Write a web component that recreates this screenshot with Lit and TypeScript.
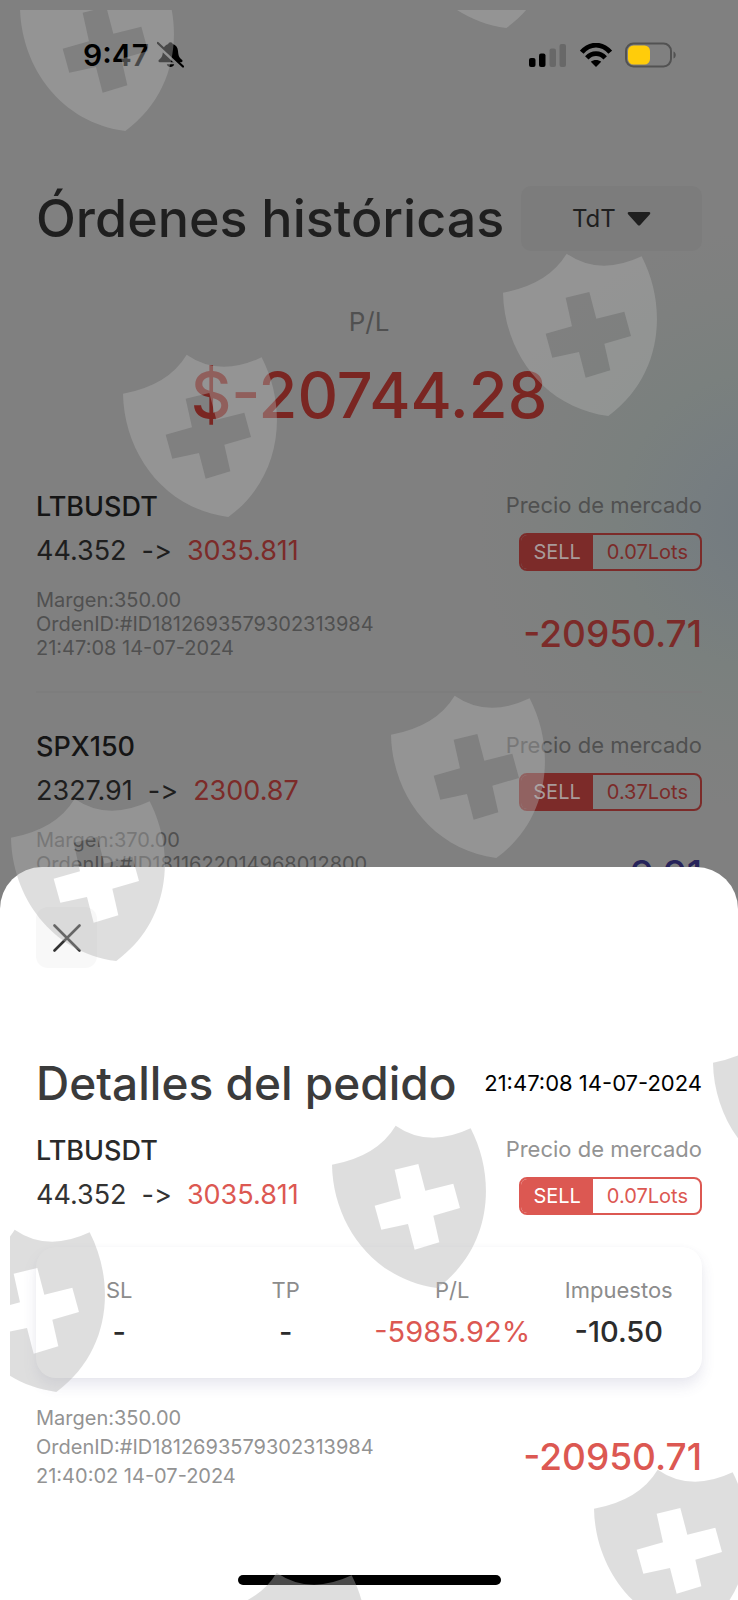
import { LitElement, html, css, svg, nothing } from "lit";
import { customElement, property } from "lit/decorators.js";
import { classMap } from "lit/directives/class-map.js";

interface Order {
  symbol: string;
  open: string;
  close: string;
  lots: string;
  margin: string;
  id: string;
  time: string;
  profit: string;
}

const ORDERS: Order[] = [
  {
    symbol: "LTBUSDT",
    open: "44.352",
    close: "3035.811",
    lots: "0.07",
    margin: "350.00",
    id: "#ID1812693579302313984",
    time: "21:47:08 14-07-2024",
    profit: "-20950.71",
  },
  {
    symbol: "SPX150",
    open: "2327.91",
    close: "2300.87",
    lots: "0.37",
    margin: "370.00",
    id: "#ID1811622014968012800",
    time: "21:40:02 14-07-2024",
    profit: "9.91",
  },
];

/** Symbol, prices, side and lot size of one order. */
@customElement("order-summary")
export class OrderSummary extends LitElement {
  @property({ attribute: false }) order!: Order;

  static styles = css`
    :host {
      display: flex;
      justify-content: space-between;
    }
    .col {
      display: grid;
      grid-template-rows: 32px 38px;
      row-gap: 12px;
      line-height: 32px;
    }
    .col.left {
      line-height: 35px;
    }
    .col.right {
      justify-items: end;
    }
    .symbol {
      font-size: 27px;
      font-weight: 500;
      color: var(--ink-strong);
    }
    .prices {
      display: flex;
      gap: 15px;
      font-size: 27px;
      font-variant-ligatures: none;
      color: var(--ink);
    }
    .close {
      color: var(--red);
    }
    .market {
      font-size: 22px;
      color: var(--muted);
    }
    .badge {
      display: flex;
      box-sizing: border-box;
      height: 38px;
      border: 2px solid var(--red);
      border-radius: 8px;
      overflow: hidden;
      font-size: 20px;
      line-height: 34px;
    }
    .side {
      padding: 0 12px;
      background: var(--red);
      color: var(--on-red);
    }
    .lots {
      padding: 0 12px 0 14px;
      color: var(--red);
    }
  `;

  render() {
    const o = this.order;
    return html`
      <div class="col left">
        <div class="symbol">${o.symbol}</div>
        <div class="prices">
          <span>${o.open}</span><span>-&gt;</span><span class="close">${o.close}</span>
        </div>
      </div>
      <div class="col right">
        <div class="market">Precio de mercado</div>
        <div class="badge"><span class="side">SELL</span><span class="lots">${o.lots}Lots</span></div>
      </div>
    `;
  }
}

/** Margin, identifier and time on the left, result on the right. */
@customElement("order-meta")
export class OrderMeta extends LitElement {
  @property({ attribute: false }) order!: Order;
  @property() time = "";

  static styles = css`
    :host {
      display: flex;
      justify-content: space-between;
      align-items: flex-end;
    }
    .lines {
      font-size: 20px;
      line-height: var(--meta-line, 24px);
      color: var(--muted);
    }
    .profit {
      font-size: 37px;
      line-height: 52px;
      font-weight: 500;
      color: var(--red);
      padding-bottom: var(--meta-drop, 0);
    }
    .profit.gain {
      color: var(--blue);
    }
  `;

  render() {
    const o = this.order;
    return html`
      <div class="lines">
        <div>Margen:${o.margin}</div>
        <div>OrdenID:${o.id}</div>
        <div>${this.time || o.time}</div>
      </div>
      <div class=${classMap({ profit: true, gain: !o.profit.startsWith("-") })}>${o.profit}</div>
    `;
  }
}

const SHIELDS: [number, number][] = [
  [17, -34],
  [398, -137],
  [120, 352],
  [500, 251],
  [388, 693],
  [8, 796],
  [329, 1123],
  [710, 1021],
  [-52, 1227],
  [591, 1467],
  [210, 1570],
];

const SHIELD =
  "M9 125Q145 100 200 8Q298 76 425 16C506 174 484 380 325 495C130 470 12 300 9 125Z" +
  "M197 140L268 123L289 203L373 182L393 255L313 278L331 358L257 380L237 303L157 320L137 248L216 226Z";

@customElement("app-root")
export class AppRoot extends LitElement {
  static styles = css`
    :host {
      position: relative;
      display: flex;
      flex-direction: column;
      height: 100vh;
      overflow: hidden;
      font-family: Inter, "Liberation Sans", sans-serif;
      background: radial-gradient(circle at 104% 520px, #727a80 0, #767d80 70px, #7a807e 150px, #7e807f 230px, #808080 290px)
        #808080;
    }
    h1,
    h2 {
      margin: 0;
      font-weight: 500;
      white-space: nowrap;
    }
    .orders {
      --ink-strong: #151515;
      --ink: #1e1e1e;
      --muted: #505050;
      --red: #7c2b29;
      --on-red: #a89a9a;
      --blue: #26235a;
      flex: 1 1 0;
      min-height: 0;
      overflow: hidden;
    }
    .status {
      display: flex;
      align-items: center;
      justify-content: space-between;
      height: 110px;
      padding: 0 60px 0 83px;
    }
    .clock,
    .signals {
      display: flex;
      align-items: center;
    }
    .clock {
      gap: 8px;
      font-size: 30px;
      font-weight: 600;
    }
    .signals {
      gap: 13px;
    }
    .body {
      padding: 76px 36px 0;
    }
    .head {
      display: flex;
      align-items: center;
      justify-content: space-between;
    }
    .head h1 {
      font-size: 52px;
      line-height: 65px;
      color: #1f1f1f;
    }
    .filter {
      display: flex;
      align-items: center;
      justify-content: center;
      gap: 11px;
      width: 181px;
      height: 65px;
      border-radius: 10px;
      background: #7c7c7c;
      color: #1f1f1f;
    }
    .filter select {
      appearance: none;
      border: 0;
      padding: 0;
      background: transparent;
      font: inherit;
      font-size: 24px;
      color: inherit;
    }
    .filter svg {
      pointer-events: none;
    }
    .total {
      display: grid;
      justify-items: center;
      row-gap: 25px;
      margin: 55px 0 62px;
    }
    .total .label {
      font-size: 26px;
      line-height: 32px;
      color: #505050;
    }
    .total .value {
      font-size: 63px;
      line-height: 64px;
      font-weight: 500;
      color: #7a2622;
    }
    .order {
      display: grid;
      row-gap: 17px;
      padding-bottom: 31px;
      margin-bottom: 36px;
      border-bottom: 2px solid #7d7d7d;
    }
    .sheet {
      --ink-strong: #2a2a2a;
      --ink: #333;
      --muted: #939393;
      --red: #dc5852;
      --on-red: #fff;
      --blue: #4a45b0;
      padding: 40px 36px 15px;
      border-radius: 42px 42px 0 0;
      background: #fff;
    }
    .close {
      display: flex;
      align-items: center;
      justify-content: center;
      width: 61px;
      height: 61px;
      padding: 0;
      border: 0;
      border-radius: 12px;
      background: #f8f8f8;
    }
    .sheet .head {
      margin: 87px 0 22px;
    }
    .sheet h2 {
      font-size: 46px;
      line-height: 56px;
      color: #3b3b3b;
    }
    .sheet time {
      font-size: 22px;
      color: #000;
    }
    .card {
      display: grid;
      grid-template-columns: repeat(4, 1fr);
      margin: 32px 0 26px;
      padding: 27px 0 30px;
      border-radius: 20px;
      background: #fff;
      box-shadow:
        0 8px 14px rgba(70, 70, 130, 0.12),
        0 0 6px rgba(0, 0, 0, 0.02);
    }
    .stat {
      display: grid;
      justify-items: center;
      row-gap: 10px;
      margin: 0;
      line-height: 32px;
    }
    .stat dt {
      font-size: 22px;
      color: #8c8c8c;
    }
    .stat dd {
      margin: 0;
      font-size: 29px;
      font-weight: 500;
      color: #2c2c2c;
    }
    .stat dd.loss {
      font-weight: 400;
      color: #dc5852;
    }
    .sheet order-meta {
      --meta-line: 29px;
      --meta-drop: 8px;
    }
    .home {
      width: 263px;
      height: 10px;
      margin: 84px auto 0;
      border-radius: 5px;
      background: #000;
    }
    .watermark {
      position: absolute;
      inset: 0;
      width: 100%;
      height: 100%;
      pointer-events: none;
    }
  `;

  private renderStatus() {
    return html`
      <div class="status">
        <div class="clock">
          <span>9:47</span>
          <svg width="27" height="28" viewBox="0 0 27 28" aria-hidden="true">
            <path
              d="M13.5 1.2c-1.3 0-2 .8-2.2 1.8C8 4 6.300 6.500 6 10c-.4 4.500-1 6.500-4 8.800-1 .8-.6 2.500.8 2.500h21.400c1.400 0 1.800-1.700.8-2.500-3-2.300-3.600-4.300-4-8.800-.3-3.500-2-6-5.300-7-.2-1-.9-1.800-2.200-1.800zM9.800 23.200c.5 1.800 1.900 2.800 3.700 2.800s3.200-1 3.700-2.800z"
            />
            <path d="M1 4.500L25 27" stroke="#808080" stroke-width="3.500" />
            <path d="M.8 2L26 25.500" stroke="#000" stroke-width="2.200" stroke-linecap="round" />
          </svg>
        </div>
        <div class="signals">
          <svg width="38" height="24" viewBox="0 0 38 24" aria-hidden="true">
            <rect x="0" y="15" width="6.500" height="9" rx="2" />
            <rect x="10" y="10.500" width="6.500" height="13.500" rx="2" />
            <rect x="20.500" y="5.500" width="6.500" height="18.500" rx="2" fill="#686868" />
            <rect x="30.500" y="1" width="6.500" height="23" rx="2" fill="#686868" />
          </svg>
          <svg width="32" height="24" viewBox="0 0 32 24" aria-hidden="true">
            <g fill="none" stroke="#000" stroke-width="4.800">
              <path d="M1.800 9.200C10-.2 22-.2 30.200 9.200" />
              <path d="M6.800 14.800c5.300-5.500 13.100-5.500 18.400 0" />
            </g>
            <path d="M10.800 18.800c2.900-2.500 7.500-2.500 10.400 0L16 24z" />
          </svg>
          <svg width="53" height="26" viewBox="0 0 53 26" aria-hidden="true">
            <rect x="1" y="1.500" width="45" height="23" rx="7.500" fill="none" stroke="#525252" stroke-width="2" />
            <rect x="3" y="3.500" width="22" height="19" rx="5.500" fill="#ffcc0a" />
            <path d="M48.500 9.500c3 1 3 6 0 7z" fill="#525252" />
          </svg>
        </div>
      </div>
    `;
  }

  private renderStat(label: string, value: string, loss = false) {
    return html`<dl class="stat">
      <dt>${label}</dt>
      <dd class=${loss ? "loss" : nothing}>${value}</dd>
    </dl>`;
  }

  render() {
    const detail = ORDERS[0];
    return html`
      <section class="orders">
        ${this.renderStatus()}
        <div class="body">
          <header class="head">
            <h1>Órdenes históricas</h1>
            <label class="filter">
              <select aria-label="Periodo">
                <option>TdT</option>
              </select>
              <svg width="24" height="16" viewBox="0 0 24 16" aria-hidden="true">
                <path
                  d="M2 1h20c1.300 0 1.700 1.300.9 2.200L13.200 14c-.7.800-1.700.800-2.400 0L1.100 3.200C.3 2.300.7 1 2 1z"
                  fill="#1f1f1f"
                />
              </svg>
            </label>
          </header>
          <div class="total">
            <div class="label">P/L</div>
            <div class="value">$-20744.28</div>
          </div>
          ${ORDERS.map(
            (o) => html`<article class="order">
              <order-summary .order=${o}></order-summary>
              <order-meta .order=${o}></order-meta>
            </article>`
          )}
        </div>
      </section>

      <section class="sheet" role="dialog" aria-labelledby="detail-title">
        <button class="close" type="button" aria-label="Cerrar">
          <svg width="28" height="28" viewBox="0 0 28 28" aria-hidden="true">
            <path d="M1.500 1.500L26.500 26.500M26.500 1.500L1.500 26.500" stroke="#333" stroke-width="2.600" stroke-linecap="round" />
          </svg>
        </button>
        <div class="head">
          <h2 id="detail-title">Detalles del pedido</h2>
          <time>${detail.time}</time>
        </div>
        <order-summary .order=${detail}></order-summary>
        <div class="card">
          ${this.renderStat("SL", "-")} ${this.renderStat("TP", "-")}
          ${this.renderStat("P/L", "-5985.92%", true)} ${this.renderStat("Impuestos", "-10.50")}
        </div>
        <order-meta .order=${detail} time="21:40:02 14-07-2024"></order-meta>
        <div class="home"></div>
      </section>

      <svg class="watermark" viewBox="0 0 738 1600" preserveAspectRatio="xMidYMin slice" aria-hidden="true">
        <clipPath id="area"><rect x="10" y="10" width="728" height="1590" /></clipPath>
        <g clip-path="url(#area)" fill="#b0b0b0" fill-opacity="0.417" fill-rule="evenodd">
          ${SHIELDS.map(([x, y]) => svg`<path transform="translate(${x} ${y}) scale(0.3333)" d=${SHIELD} />`)}
        </g>
      </svg>
    `;
  }
}
